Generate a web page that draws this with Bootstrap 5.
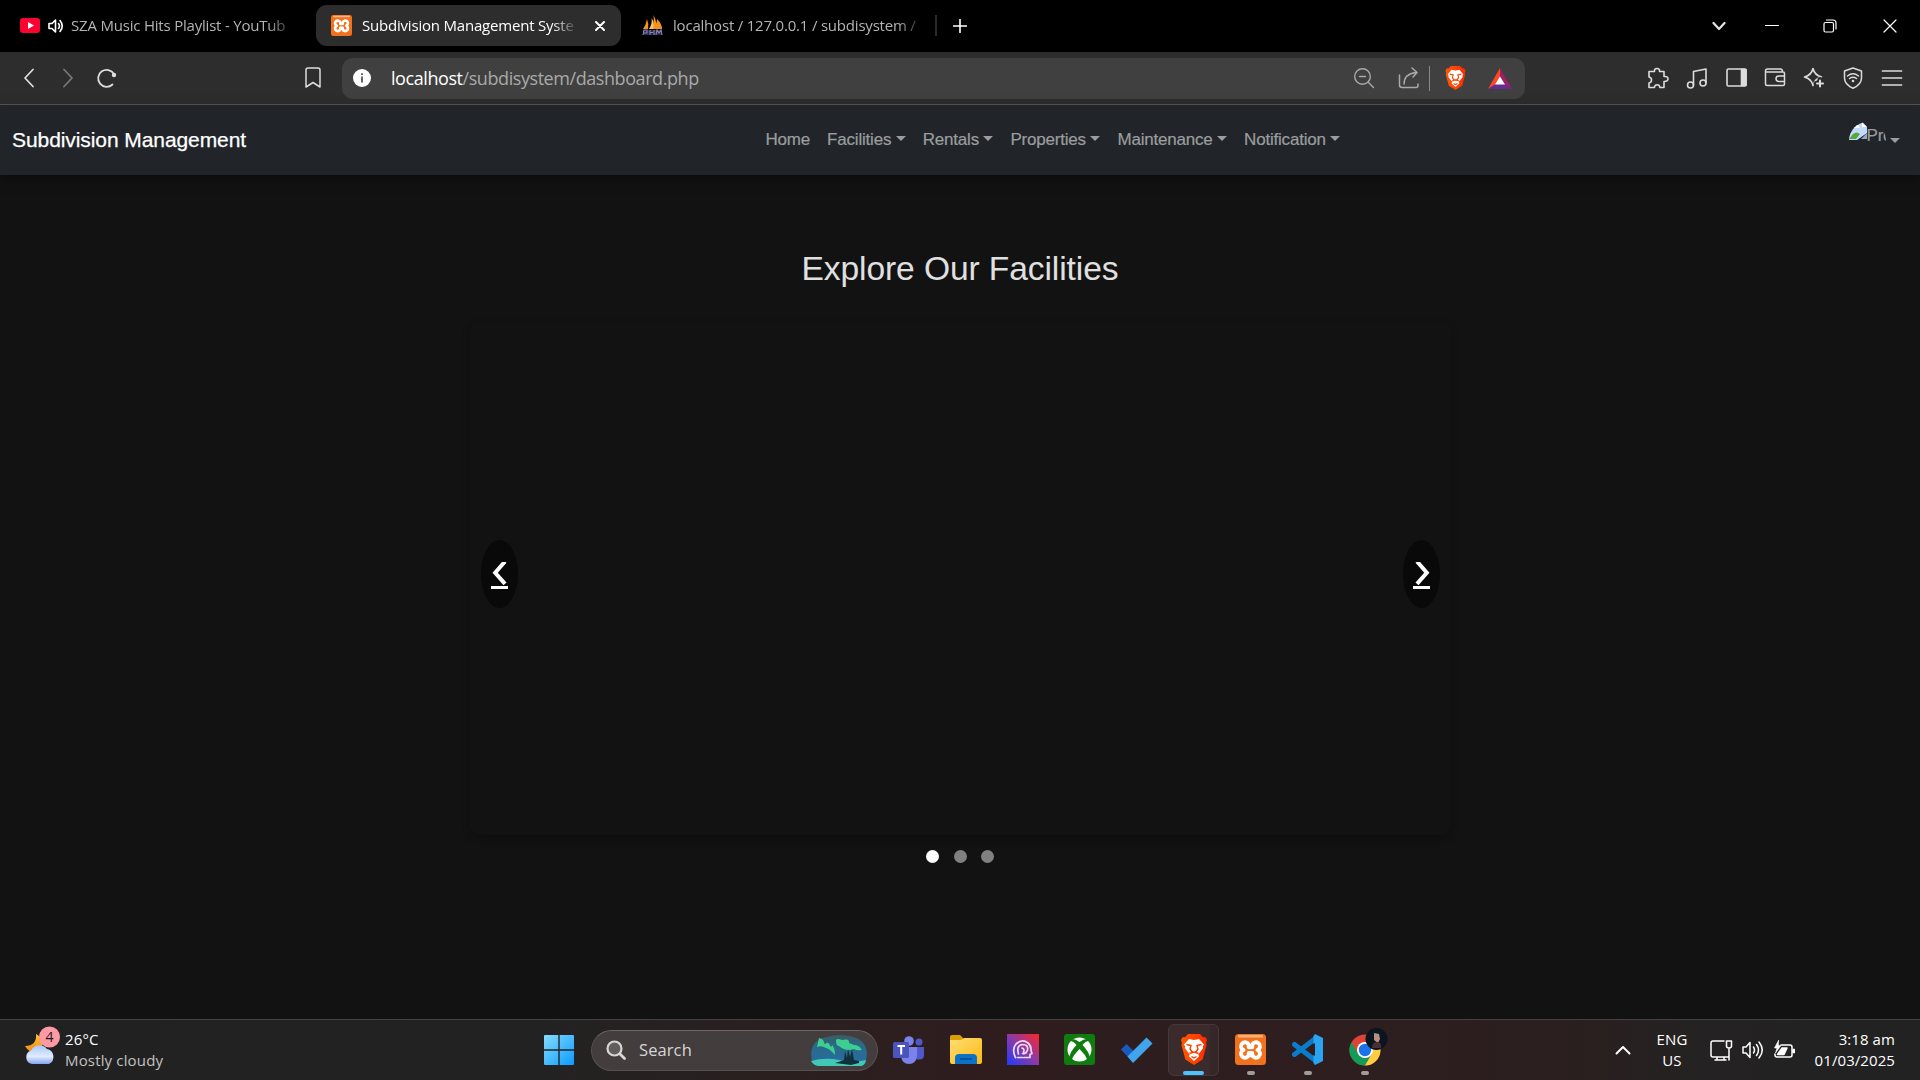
<!DOCTYPE html>
<html lang="en">
<head>
<meta charset="utf-8">
<title>Subdivision Management System</title>
<link href="https://cdn.jsdelivr.net/npm/bootstrap@5.3.0/dist/css/bootstrap.min.css" rel="stylesheet">
<style>
html,body{width:1920px;height:1080px;overflow:hidden;margin:0}
body{background:#121212;font-family:"Open Sans","Noto Sans",sans-serif;color:#fff;line-height:1}
svg{display:block;flex:none}
.ln{fill:none;stroke:currentColor;stroke-linecap:round;stroke-linejoin:round}
.tabstrip{height:52px;background:#000;font-size:15px;color:#b4b4b4;padding-bottom:1px}
.tabtext{line-height:22px;white-space:nowrap;overflow:hidden;letter-spacing:-.2px;padding-bottom:1px;
  -webkit-mask-image:linear-gradient(90deg,#000 calc(100% - 28px),transparent);mask-image:linear-gradient(90deg,#000 calc(100% - 28px),transparent)}
.tab-yt{width:316px;padding-left:20px}
.tab-on{width:305px;height:41px;background:#2d2d2d;border-radius:11px;padding-left:15px;color:#fff}
.tab-pma{width:314px;padding-left:21px}
.tab-sep{width:2px;height:21px;background:#2b2b2b}
.toolbar{height:53px;background:#2d2d2d;border-bottom:1px solid #575757;color:#dcdcdc;padding-left:19px}
.omni{width:1183px;height:41px;background:#404040;border-radius:11px;padding-left:11px;color:#a9a9a9}
.url{width:968px;font-size:18px;letter-spacing:-.43px;line-height:24px;margin-left:20px;padding-bottom:1px}
.site{font-family:"Liberation Sans",Arial,sans-serif}
.appbar{height:70px;background:#212529;padding:0 20px 0 12px;box-shadow:0 4px 12px rgba(0,0,0,.35);position:relative}
.appbar .navbar-brand{width:745px;font-size:21px;letter-spacing:-.08px;color:#fff;padding:0;margin:0;line-height:30px;-webkit-text-stroke:.25px #fff}
.appbar .nav-link{font-size:17px;letter-spacing:-.2px;color:#9b9d9e;padding:0 8.500px;line-height:24px;-webkit-text-stroke:.2px #9b9d9e}
.appbar .dropdown-toggle::after{margin-left:4.500px;vertical-align:4px;border-top-width:5px;border-left-width:5px;border-right-width:5px}
.appbar .profile{padding:0;margin-left:auto}
.thumb{width:37px;height:37px;border-radius:50%;overflow:hidden;font-size:17px;color:#9b9d9e}
.page-main{height:844px}
.page-main h2{font-size:33.600px;margin:75px 0 0;line-height:38px;color:#e0e0e0;font-weight:400;letter-spacing:-.1px}
.slides{width:981px;height:513px;margin-top:34px;border-radius:11px;box-shadow:0 4px 9px rgba(0,0,0,.22);padding:218px 11px 0}
.arrow{width:37px;height:68px;border-radius:50%;background:#090909}
.arrow span{width:17px;height:27px;border-bottom:3px solid #fff;margin-top:2px}
.pips{gap:14.500px;margin-top:15px}
.pips i{width:13px;height:13px;border-radius:50%;background:#808080}
.pips i:first-child{background:#fff}
.taskbar{height:61px;border-top:1px solid #434343;background:linear-gradient(90deg,#212121 0,#222 520px,#2a2020 760px,#2f1d1e 980px,#2d1e1f 1420px,#2b1f1f 1560px,#242222 1700px,#222 1920px);font-size:15px}
.weather{width:530px;padding-left:24px}
.wtext{margin-left:5px;line-height:21px;letter-spacing:.16px;color:#c2c2c2}
.search{width:287px;height:41px;border-radius:21px;background:#433d3d;border:1px solid #565151;border-top-color:#6d6868;padding:0 9px 0 14px;font-size:16.500px;color:#d8d5d5;margin-left:4px}
.slot{width:57px;height:60px;position:relative;padding-bottom:1px}
.slot.run::after{content:"";position:absolute;left:25px;top:51px;width:8px;height:4px;border-radius:2px;background:#a29b9b}
.slot.live::before{content:"";position:absolute;left:3px;top:4px;width:46px;height:52px;border-radius:6px;background:#3b2b2c;border:1px solid #463738}
.slot.live .stack{position:absolute;left:45px;top:4px;width:9px;height:52px;border:1px solid #463738;border-left:0;border-radius:0 6px 6px 0;background:#352628}
.slot.live::after{content:"";position:absolute;left:18px;top:51px;width:21px;height:4px;border-radius:2px;background:#4cc2ff}
.slot svg{position:relative}
.tray{padding-right:25px;line-height:21px;letter-spacing:.08px}
</style>
<script src="https://cdn.jsdelivr.net/npm/bootstrap@5.3.0/dist/js/bootstrap.bundle.min.js"></script>
</head>
<body class="d-flex flex-column">
<svg width="0" height="0" style="position:absolute">
<defs>
<linearGradient id="gb" x1="0" y1="0" x2="1" y2="0"><stop offset="0" stop-color="#ff5a00"/><stop offset="1" stop-color="#ff2a00"/></linearGradient>
<linearGradient id="gw" gradientUnits="userSpaceOnUse" x1="0" y1="0" x2="30" y2="30"><stop offset="0" stop-color="#86dcff"/><stop offset="1" stop-color="#0a9bff"/></linearGradient>
<linearGradient id="gf" x1="0" y1="0" x2="1" y2="1"><stop offset="0" stop-color="#ffde74"/><stop offset="1" stop-color="#fcb912"/></linearGradient>
<linearGradient id="gp" x1="0" y1="1" x2="1" y2="0"><stop offset="0" stop-color="#1c3cff"/><stop offset=".5" stop-color="#8b3aa8"/><stop offset="1" stop-color="#ff2525"/></linearGradient>
<linearGradient id="gc" x1="0" y1="0" x2="0" y2="1"><stop offset="0" stop-color="#a9c9fb"/><stop offset=".6" stop-color="#e0ebfd"/><stop offset="1" stop-color="#7fa5ee"/></linearGradient>
<linearGradient id="gm" x1="0" y1="0" x2="0" y2="1"><stop offset="0" stop-color="#fcc52c"/><stop offset="1" stop-color="#f58a16"/></linearGradient>
<linearGradient id="ga" x1="0" y1="0" x2="0" y2="1"><stop offset="0" stop-color="#3b5b63"/><stop offset=".35" stop-color="#286c88"/><stop offset="1" stop-color="#2a6ba6"/></linearGradient>
<symbol id="brave" viewBox="0 0 26 31">
<path fill="url(#gb)" d="M7 0h12l3 3.200 2.200-.3L26 6l-1 3 .6 2-4 14.500L13 31l-8.600-5.500L.4 11 1 9 0 6l1.800-3.100L4 3.200z"/>
<path fill="#fff" d="M8 5l5 .9L18 5l5 5.500-1.200 2 .4 1.600-4.800 6.200.6 2.200-5 4.500-5-4.500.6-2.200L3.800 14.100l.4-1.600-1.200-2z"/>
<path fill="none" stroke="#fb4200" stroke-width="1.400" d="M5.500 10.500l4.500 1-1 3.500 2.500 3.500M20.500 10.500l-4.500 1 1 3.500-2.500 3.500M8.500 19.500L13 18l4.500 1.500M10.500 22.500L13 24l2.500-1.500"/>
</symbol>
<symbol id="xampp" viewBox="0 0 31 31"><rect width="31" height="31" rx="3.500" fill="#f2711c"/><rect x="3" y="1" width="25" height="2.500" rx="1.200" fill="#fbb583"/>
<path fill="none" stroke="#fff" stroke-width="4" stroke-linejoin="round" d="M15.500 13.200h-1.700V11a4 4 0 1 0-5.300 5 4 4 0 1 0 5.300 5v-2h3.400v2a4 4 0 1 0 5.300-5 4 4 0 1 0-5.300-5v2.200z"/></symbol>
</defs></svg>

<!-- browser tabs -->
<div class="tabstrip d-flex align-items-center flex-shrink-0">
  <div class="tab-yt d-flex align-items-center">
    <svg width="20" height="15"><rect width="20" height="15" rx="3" fill="#ff0033"/><path fill="#fff" d="M8 4l6 3.500L8 11z"/></svg>
    <svg class="ln ms-2 text-white" width="16" height="16" stroke-width="1.600"><path d="M1 5.500h3L7.500 2v12L4 10.500H1zM10.500 5.500q2 2.500 0 5M12 2.500q4.500 5.500 0 11"/></svg>
    <div class="tabtext" style="width:225px;margin-left:7px">SZA Music Hits Playlist - YouTub</div>
  </div>
  <div class="tab-on d-flex align-items-center">
    <svg width="21" height="21"><use href="#xampp"/></svg>
    <div class="tabtext" style="width:217px;margin-left:10px">Subdivision Management Syste</div>
    <svg class="ln" width="10" height="10" stroke-width="2" style="margin-left:16px"><path d="M1 1l8 8M9 1L1 9"/></svg>
  </div>
  <div class="tab-pma d-flex align-items-center">
    <svg width="21" height="21"><path fill="#f59320" d="M11.500 0q4 8 3 14h-5q3-6 2-14zM5 4q2 5 1 10H1q3-4 4-10zM15 4q5 5 5 10h-6z"/><path fill="#ffc36a" d="M9.500 3q1 6-2.500 11h4q2-6-1.500-11z"/><path d="M1 15h19v5H1z" fill="#27274a"/><path fill="none" stroke="#8888b8" stroke-width="1.100" d="M1 20l1-5h3v3H2M8 20v-5M8 17.500h3M12 20v-5M14 20l1-5 2 3 2-3 1 5"/></svg>
    <div class="tabtext" style="width:252px;margin-left:10px">localhost / 127.0.0.1 / subdisystem /</div>
  </div>
  <div class="tab-sep"></div>
  <svg class="ln text-white" width="14" height="14" stroke-width="1.600" style="margin-left:16px"><path d="M7 .5v13M.5 7h13"/></svg>
  <svg class="ln" width="14" height="10" stroke-width="2.200" style="margin-left:745px;color:#e4e4e4"><path d="M1.500 2L7 8l5.500-6"/></svg>
  <svg class="ln text-white" width="14" height="14" stroke-width="1" style="margin-left:39px"><path d="M.5 6.500h13"/></svg>
  <svg class="ln text-white" width="14" height="14" stroke-width="1.200" style="margin-left:44px"><rect x="1" y="3.500" width="9.500" height="9.500" rx="1.500"/><path d="M3.500 1h6.500q3 0 3 3v6"/></svg>
  <svg class="ln text-white" width="14" height="14" stroke-width="1.200" style="margin-left:46px"><path d="M1 1l12 12M13 1L1 13"/></svg>
</div>

<!-- browser toolbar -->
<div class="toolbar d-flex align-items-center flex-shrink-0">
  <svg class="ln" width="20" height="20" stroke-width="1.800"><path d="M14 1.500L6 10l8 8.500"/></svg>
  <svg class="ln" width="20" height="20" stroke-width="1.800" style="margin-left:19px;color:#777"><path d="M6 1.500l8 8.500-8 8.500"/></svg>
  <svg class="ln" width="22" height="20" stroke-width="1.800" style="margin-left:18px"><path d="M16.500 16.500A8.500 8.500 0 1 1 18 6"/><circle cx="18" cy="7" r="2.200" fill="currentColor" stroke="none"/></svg>
  <svg class="ln" width="16" height="22" stroke-width="1.500" style="margin-left:187px"><path d="M1 3q0-2 2-2h10q2 0 2 2v17l-7-4.500L1 20z"/></svg>
  <div class="omni d-flex align-items-center" style="margin-left:21px">
    <svg width="18" height="18"><circle cx="9" cy="9" r="9" fill="#fff"/><path d="M9 7.500v6M9 4.200v1.800" stroke="#404040" stroke-width="1.600"/></svg>
    <div class="url"><span class="text-white">localhost</span>/subdisystem/dashboard.php</div>
    <svg class="ln" width="22" height="22" stroke-width="1.400" style="margin-left:-6px"><circle cx="9.500" cy="9.500" r="7.800"/><path d="M15.500 15.500l5 5M6.500 9.500h6"/></svg>
    <svg class="ln" width="22" height="22" stroke-width="1.500" style="margin-left:23px"><path d="M1.500 8v10q0 2.500 2.500 2.500h14q2 0 2-2V17M6 17q0-10 12-11.500M14 1l5 4.500-4 4.500"/></svg>
    <div style="width:1px;height:25px;background:#888;margin-left:9px"></div>
    <svg width="21" height="24" style="margin-left:15px"><use href="#brave"/></svg>
    <svg width="24" height="21" style="margin-left:22px"><path d="M12 0L0 21l12-7z" fill="#ff4724"/><path d="M12 0v14l12 7z" fill="#9e1f63"/><path d="M0 21h24l-12-8z" fill="#662d91"/><path d="M12 8.500l-5 8h10z" fill="#fff"/></svg>
  </div>
  <div class="d-flex align-items-center" style="gap:17.100px;margin-left:121.500px">
    <svg class="ln" width="22" height="22" stroke-width="1.600"><path d="M2 4.500h5.500q-.5-3 2.500-3t2.500 3H17v5q4-.5 4 2.300T17 14.500v6h-4q-.5-2.800-2.800-2.800T7.300 20.500H2v-4.500q2.500-.5 2.500-3T2 10z"/></svg>
    <svg class="ln" width="22" height="22" stroke-width="1.600"><circle cx="4.500" cy="18" r="3"/><circle cx="17" cy="16" r="3"/><path d="M7.500 18V4.500L20 2v14"/></svg>
    <svg class="ln" width="22" height="22" stroke-width="1.600"><rect x="2" y="2" width="19" height="17" rx="1.500"/><path fill="currentColor" d="M16.500 2.500H21v16h-4.500z"/></svg>
    <svg class="ln" width="22" height="22" stroke-width="1.500"><path d="M1.500 4q0-2 2-2h13q2 0 2 3M1.500 4v13q0 1.500 1.500 1.500h16q1.500 0 1.500-1.500V6.500Q20.500 5 19 5H2M20.500 9H15q-3 0-3 2.700t3 2.800h5.500"/></svg>
    <svg class="ln" width="22" height="22" stroke-width="1.600"><path d="M10 1.500q1.500 6.500 8.500 8.500-7 2-8.500 8.500Q8.500 12 1.500 10 8.500 8 10 1.500z"/><path d="M17 12.500v8M13 16.500h8" stroke="#2d2d2d" stroke-width="5"/><path d="M17 13.500v6M14 16.500h6" stroke-width="2"/></svg>
    <svg class="ln" width="22" height="22" stroke-width="1.500"><path d="M11 1l8.500 3v7q0 6.500-8.500 10.200Q2.500 17.500 2.500 11V4z"/><path d="M5.500 9q5.500-4.500 11 0M7.500 11.500q3.500-2.500 7 0"/><circle cx="11" cy="14" r="1.300" fill="currentColor" stroke="none"/></svg>
    <svg class="ln" width="22" height="22" stroke-width="1.700"><path d="M1.500 4h19M1.500 11h19M1.500 18h19"/></svg>
  </div>
</div>

<!-- site navigation -->
<nav class="site appbar navbar-dark d-flex align-items-center flex-shrink-0">
  <a class="navbar-brand" href="#">Subdivision Management</a>
  <div class="navbar-nav flex-row">
    <a class="nav-link" href="#">Home</a>
    <a class="nav-link dropdown-toggle" href="#">Facilities</a>
    <a class="nav-link dropdown-toggle" href="#">Rentals</a>
    <a class="nav-link dropdown-toggle" href="#">Properties</a>
    <a class="nav-link dropdown-toggle" href="#">Maintenance</a>
    <a class="nav-link dropdown-toggle" href="#">Notification</a>
  </div>
  <a class="nav-link dropdown-toggle profile d-flex align-items-center" href="#">
    <div class="thumb d-flex align-items-start">
      <svg width="18" height="18"><path fill="#c5d9fb" d="M0 0h13l5 5v6L8 18H0z"/><path fill="#fff" d="M2 5q3-4 7-2l2 3H2zM13 0v5h5z"/><path fill="#56a83c" d="M0 17l4-5q4-3 7 0l-4 5z"/><path fill="#9aa7b5" d="M12 17l6-6v6z"/></svg><span style="line-height:27px">Pro</span>
    </div>
  </a>
</nav>

<main class="site page-main d-flex flex-column align-items-center flex-shrink-0">
  <h2>Explore Our Facilities</h2>
  <div class="slides d-flex justify-content-between align-items-start">
    <div class="arrow d-flex justify-content-center align-items-center"><span><svg class="ln" width="17" height="23" stroke-width="4" style="stroke-linecap:butt;stroke-linejoin:miter"><path d="M14 -.5L4.200 10.700l9.800 11.200"/></svg></span></div>
    <div class="arrow d-flex justify-content-center align-items-center"><span><svg class="ln" width="17" height="23" stroke-width="4" style="stroke-linecap:butt;stroke-linejoin:miter"><path d="M4 -.5l9.800 11.200L4 21.900"/></svg></span></div>
  </div>
  <div class="pips d-flex"><i></i><i></i><i></i></div>
</main>

<!-- taskbar -->
<div class="taskbar d-flex align-items-center flex-shrink-0">
  <div class="weather d-flex align-items-center">
    <svg width="36" height="42" style="margin-top:-10px"><path fill="url(#gm)" d="M12 10q9 5 5 17-11 4-16-5 12 0 11-12z"/><path fill="url(#gc)" d="M8 40a7 7 0 0 1-1-13.500A9.500 9.500 0 0 1 23 25a8 8 0 0 1 2 15z"/><circle cx="25.500" cy="13" r="10.500" fill="#ff99a4"/><text x="25.500" y="18" font-size="14" text-anchor="middle" fill="#1b1b1b">4</text></svg>
    <div class="wtext mb-0"><div class="text-white">26°C</div><div>Mostly cloudy</div></div>
  </div>
  <div class="slot d-flex justify-content-center align-items-center"><svg width="30" height="30" fill="url(#gw)"><path d="M0 1q0-1 1-1h13.300v14.300H0zM15.700 0H29q1 0 1 1v13.300H15.700zM0 15.700h14.300V30H1q-1 0-1-1zM15.700 15.700H30V29q0 1-1 1H15.700z"/></svg></div>
  <div class="search d-flex align-items-center">
    <svg class="ln" width="20" height="20" stroke-width="2.200"><circle cx="8.500" cy="8.500" r="7" fill="#625d5d"/><path d="M14 14l4.500 4.500" stroke-width="2.800"/></svg>
    <span style="margin-left:13px;letter-spacing:.1px">Search</span>
    <svg class="ms-auto" width="58" height="31"><path fill="url(#ga)" d="M2 26Q-2 6 16 2q14-4 28 0 16 6 12 23-1 6-6 6H8q-5-1-6-5z"/><path fill="#3fd992" opacity=".9" d="M9 3l-2 9q4-2 9 1 4 1 9 7 0-7-3-10 0 3-2 1-1-4-4-3 0 2-2 0 0-4-5-5zM26 5q1-2 6 0 8-2 7 3l5 2q5 0 8 5-5 1-8-1-8 3-15-3-3 0-3-6z"/><path fill="#42c9b6" d="M1 26q14-4 28-1t27 0q-1 6-6 6H8q-5-1-7-5z"/><path fill="#12303a" d="M25 28l9-3 1-9 2 7 1-9 2 8 2-8 2 11 5 1v2l-8 2z"/></svg>
  </div>
  <div class="slot d-flex justify-content-center align-items-center" style="margin-left:2px"><svg width="32" height="28"><circle cx="26" cy="6" r="3.500" fill="#5059c9"/><circle cx="16" cy="5" r="4.800" fill="#7b83eb"/><path fill="#5059c9" d="M20 11h11v9q-1 5-8 3z"/><path fill="#7b83eb" d="M8 11h16v9q-1 8-8 8t-8-8z"/><rect y="6" width="16" height="16" rx="1.500" fill="#4b53bc"/><path d="M4.500 10h7.500M8.200 10v8.500" stroke="#fff" stroke-width="2"/></svg></div>
  <div class="slot d-flex justify-content-center align-items-center"><svg width="32" height="29"><path d="M0 2q0-2 2-2h8l3 3v8H0z" fill="#dba006"/><path d="M0 5h11l3-2h16q2 0 2 2v22q0 2-2 2H2q-2 0-2-2z" fill="url(#gf)"/><path d="M5 29v-6q0-4 4-4h14q4 0 4 4v6z" fill="#0a73c9"/><path d="M10 24h12" stroke="#05498a" stroke-width="1.600"/></svg></div>
  <div class="slot d-flex justify-content-center align-items-center"><svg width="32" height="31"><path fill="url(#gp)" d="M0 0h32v31H0z"/><g class="ln" stroke-width="1.700" style="color:#e9dcf5"><path d="M8.500 23.500q-4-8 .5-13.500 6-5.500 12-1 3.500 3 3 7.500l1 3-2 1v3h-6M10.500 23.500h5M11.500 20q-2.500-9 4-9.500 6 0 5 5.500-1.500 4.500-5 3.500M15 14q3 1 1.500 4"/></g></svg></div>
  <div class="slot d-flex justify-content-center align-items-center"><svg width="31" height="31"><rect width="31" height="31" rx="3" fill="#107c10"/><circle cx="15.500" cy="15.500" r="12" fill="#fff"/><path fill="#107c10" d="M6 5.500Q10 4 15.500 8 21 4 25 5.500l2 2q-4-2-8.500 3.500 7 7 7.500 13.500l-2 2.500q-3-7-8.500-12Q10 20 7 27l-2-2.500Q6 17.500 12.500 11 8 5.500 4 7.500z"/></svg></div>
  <div class="slot d-flex justify-content-center align-items-center"><svg width="32" height="26"><path fill="#185abd" d="M0 12.500L5.500 7l7 7-1 11z"/><path fill="#41a5ee" d="M6.500 19.500L25.500.5 31.500 6.500 12 26z"/></svg></div>
  <div class="slot live d-flex justify-content-center align-items-center"><span class="stack"></span><svg width="26" height="31"><use href="#brave"/></svg></div>
  <div class="slot run d-flex justify-content-center align-items-center"><svg width="31" height="31"><use href="#xampp"/></svg></div>
  <div class="slot run d-flex justify-content-center align-items-center"><svg width="31" height="31"><path d="M2.500 10.500L24 27M2.500 20.500L24 4" stroke="#0a7ccb" stroke-width="5" stroke-linecap="round"/><path fill="#2aa4f0" d="M23 0l8 4v23l-8 4-1.500-2V2z"/><path fill="#2e1e1f" d="M23 9v13l-8.500-6.500z"/></svg></div>
  <div class="slot run d-flex justify-content-center align-items-center"><svg width="46" height="44"><g transform="translate(7.500,6.500)"><circle cx="15.500" cy="15.500" r="15.500" fill="#db4437"/><path fill="#0f9d58" d="M2.100 7.700A15.500 15.500 0 0 0 15.500 31l6.500-11.500-13.500 0z"/><path fill="#ffcd40" d="M31 15.500A15.500 15.500 0 0 1 15.500 31l7-12V8.500h6.800q1.700 3 1.700 7z"/><circle cx="15.500" cy="15.500" r="8" fill="#fff"/><circle cx="15.500" cy="15.500" r="6.200" fill="#1a73e8"/></g><circle cx="34.500" cy="11" r="11" fill="#0a1520"/><path fill="#b98d80" d="M32 5l5 1 1 5-2 4-4-3z"/><path fill="#4a2f30" d="M30 20q0-6 5-6t4 6z"/></svg></div>
  <div class="tray d-flex align-items-center ms-auto">
    <svg class="ln" width="16" height="10" stroke-width="2"><path d="M1.500 8.500L8 2l6.500 6.500"/></svg>
    <div class="text-center" style="width:34px;margin-left:24px">ENG<br>US</div>
    <svg class="ln" width="23" height="22" stroke-width="1.500" style="margin-left:21px"><path d="M14 2H3Q1 2 1 4v12q0 2 2 2h15M7 18v3M14 18v3M5 21h11M16.500 2h5v5q0 2-2.500 2t-2.500-2zM19 9v12"/></svg>
    <svg class="ln" width="22" height="20" stroke-width="1.500" style="margin-left:9px"><path d="M1 7h3l4-4.500v15L4 13H1zM11.500 7q2 3 0 6M14.500 4.500q4 5.500 0 11M17 2q6.500 8 0 16"/></svg>
    <svg class="ln" width="22" height="20" stroke-width="1.500" style="margin-left:9px"><path d="M8 5h9q2 0 2 2v8q0 2-2 2H4q-2 0-2-2v-1"/><path fill="currentColor" d="M20 9.500h1.500v3H20zM9 8h5l-3 6.500H4.500z"/><path fill="currentColor" d="M5.500.5L1.500 8H4l-1.500 5L8 5.500H5.500z" stroke-width=".6"/></svg>
    <div class="text-end" style="width:96px;margin-left:4px">3:18 am<br>01/03/2025</div>
  </div>
</div>
</body>
</html>
